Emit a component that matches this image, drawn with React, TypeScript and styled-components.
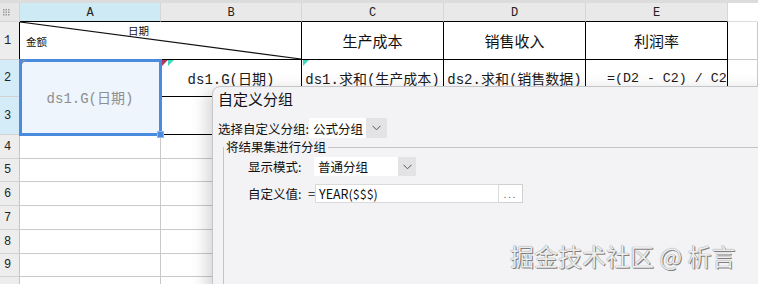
import { Fragment } from "react";
import styled, { createGlobalStyle } from "styled-components";

const GlobalStyle = createGlobalStyle`
	html, body {
		margin: 0;
		padding: 0;
		background: #fff;
		overflow: hidden;
	}
`;

const Page = styled.div`
	position: relative;
	width: 758px;
	height: 284px;
	overflow: hidden;
	background: #fff;
`;

const Sheet = styled.div`
	display: grid;
	grid-template-columns: 20px 141px 141px 142px 142px 142px 1fr;
	grid-template-rows: 19px 38px 37px 38px 24px 23px 24px 24px 24px 23px 24px;
	border-top: 3px solid #dcdcdc;
	font-family: "Liberation Mono", "Noto Sans CJK SC", monospace;
`;

const Corner = styled.div`
	display: flex;
	align-items: center;
	padding-left: 3px;
	background: #e6e6e6;
	border-right: 1px solid #d4d4d4;
	border-bottom: 1px solid #d4d4d4;
`;

const ColHead = styled.div<{ $active?: boolean; $blank?: boolean }>`
	display: flex;
	align-items: center;
	justify-content: center;
	padding-top: 2px;
	font-size: 12px;
	color: #222;
	background: ${(p) => (p.$active ? "#cdeaf5" : p.$blank ? "#fff" : "#e9e9e9")};
	border-right: 1px solid ${(p) => (p.$blank ? "#fff" : "#d6d6d6")};
	border-bottom: 1px solid ${(p) => (p.$blank ? "#dcdcdc" : "#000")};
`;

const RowHead = styled.div<{ $active?: boolean; $dark?: boolean }>`
	display: flex;
	align-items: center;
	padding-left: 4px;
	font-size: 12px;
	color: #222;
	background: ${(p) => (p.$active ? "#d4ecf7" : "#ededed")};
	border-right: 1px solid ${(p) => (p.$dark ? "#000" : "#c6c6c6")};
	border-bottom: 1px solid #d2d2d2;
`;

const Cell = styled.div<{ $dark?: boolean; $span?: number; $rows?: number }>`
	position: relative;
	grid-column: span ${(p) => p.$span ?? 1};
	grid-row: span ${(p) => p.$rows ?? 1};
	display: flex;
	align-items: center;
	justify-content: center;
	overflow: hidden;
	white-space: nowrap;
	font-size: 14px;
	color: #1a1a1a;
	border-right: 1px solid ${(p) => (p.$dark ? "#000" : "#c9c9c9")};
	border-bottom: 1px solid ${(p) => (p.$dark ? "#000" : "#c9c9c9")};
`;

const HeadCell = styled(Cell)`
	font-family: "Noto Sans CJK SC", sans-serif;
	font-size: 15px;
	color: #111;
`;

const FormulaCell = styled(Cell)`
	justify-content: flex-start;
	padding-left: 21px;
	font-size: 13.3px;
`;

const Selected = styled(Cell)`
	z-index: 1;
	overflow: visible;
	background: #eef5fd;
	color: #8e8e8e;
	outline: 3px solid #4a8be0;
	outline-offset: -2px;

	&::after {
		content: "";
		position: absolute;
		right: -4px;
		bottom: -4px;
		width: 5px;
		height: 5px;
		background: #4a8be0;
		border: 1px solid #8fb8ee;
	}
`;

const Diagonal = styled(Cell)`
	flex-direction: column;
	align-items: flex-start;
	justify-content: flex-start;
	padding: 3px 0 0 6px;
	font-family: "Noto Sans CJK SC", sans-serif;
	font-size: 10.5px;
	line-height: 11px;
	color: #111;

	svg {
		position: absolute;
		inset: 0;
		width: 100%;
		height: 100%;
	}
`;

const DiagTop = styled.span`
	margin-left: 102px;
`;

const Marker = styled.span<{ $color: string; $left: number; $size?: number }>`
	position: absolute;
	top: 0;
	left: ${(p) => p.$left}px;
	width: 0;
	height: 0;
	border-top: ${(p) => p.$size ?? 6}px solid ${(p) => p.$color};
	border-right: ${(p) => p.$size ?? 6}px solid transparent;
`;

const Dialog = styled.div`
	position: absolute;
	left: 212px;
	top: 86px;
	width: 580px;
	height: 230px;
	box-sizing: border-box;
	padding: 2px 0 0 5px;
	background: #f3f3f6;
	border: 1px solid #c6c6ca;
	border-radius: 8px 0 0 0;
	box-shadow: -6px 3px 16px rgba(0, 0, 0, 0.16);
	font-family: "Noto Sans CJK SC", "Noto Sans", sans-serif;
	color: #111;
`;

const Title = styled.div`
	font-size: 15px;
	line-height: 20px;
`;

const Row = styled.div<{ $top: number; $h: number }>`
	display: flex;
	align-items: center;
	height: ${(p) => p.$h}px;
	margin-top: ${(p) => p.$top}px;
	font-size: 12.5px;
`;

const Label = styled.span<{ $w: number }>`
	flex: none;
	width: ${(p) => p.$w}px;
	white-space: nowrap;
`;

const Select = styled.div<{ $w: number }>`
	display: flex;
	width: ${(p) => p.$w}px;
	height: 100%;
	background: #fff;
`;

const SelectText = styled.span`
	flex: 1;
	display: flex;
	align-items: center;
	padding-left: 4px;
`;

const SelectArrow = styled.span<{ $w: number }>`
	flex: none;
	display: flex;
	align-items: center;
	justify-content: center;
	width: ${(p) => p.$w}px;
	background: #e3e3e5;
`;

const Group = styled.fieldset`
	margin: 2px 0 0 5px;
	padding: 0;
	min-height: 170px;
	border: 1px solid #c4c4c4;
	border-right: none;
	border-bottom: none;
`;

const Legend = styled.legend`
	padding: 0 2px;
	font-size: 12.5px;
	line-height: 14px;
`;

const GroupBody = styled.div`
	padding: 3px 0 0 24px;
`;

const Equals = styled.span`
	flex: none;
	width: 7px;
	font-size: 13px;
`;

const Input = styled.div`
	display: flex;
	align-items: center;
	box-sizing: border-box;
	width: 184px;
	height: 100%;
	padding-left: 3px;
	background: #fff;
	border: 1px solid #dadada;
	font-size: 12.5px;
`;

const DotsButton = styled.div`
	display: flex;
	align-items: flex-end;
	justify-content: center;
	box-sizing: border-box;
	width: 24px;
	height: 100%;
	padding-bottom: 3px;
	background: #fff;
	border: 1px solid #d0d0d0;
	border-left: none;
	font-size: 9px;
	line-height: 9px;
	letter-spacing: 2px;
	color: #666;
`;

const Watermark = styled.div`
	position: absolute;
	left: 510px;
	top: 238px;
	font-family: "Noto Sans CJK SC", sans-serif;
	font-size: 24px;
	color: #ececec;
	white-space: pre;
	text-shadow: 1px 1px 0 rgba(0, 0, 0, 0.45), 0 0 1px rgba(0, 0, 0, 0.55);
`;

function Chevron() {
	return (
		<svg width="9" height="6" viewBox="0 0 9 6">
			<polyline points="0.5,0.8 4.5,4.8 8.5,0.8" fill="none" stroke="#555" strokeWidth="1" />
		</svg>
	);
}

function GripIcon() {
	const dots = [];
	for (let r = 0; r < 3; r++) {
		for (let c = 0; c < 3; c++) {
			dots.push(<rect key={`${r}-${c}`} x={c * 2.5} y={r * 2.5} width="1.5" height="1.5" fill="#9a9a9a" />);
		}
	}
	return (
		<svg width="7" height="7" viewBox="0 0 7 7">
			{dots}
		</svg>
	);
}

const letters = ["A", "B", "C", "D", "E"];

export default function App() {
	return (
		<Page>
			<GlobalStyle />
			<Sheet>
				<Corner>
					<GripIcon />
				</Corner>
				{letters.map((l) => (
					<ColHead key={l} $active={l === "A"}>
						{l}
					</ColHead>
				))}
				<ColHead $blank />

				<RowHead $dark>1</RowHead>
				<Diagonal $dark $span={2}>
					<svg viewBox="0 0 100 100" preserveAspectRatio="none">
						<line x1="0" y1="0" x2="100" y2="100" stroke="#111" strokeWidth="1.2" vectorEffect="non-scaling-stroke" />
					</svg>
					<DiagTop>日期</DiagTop>
					<span>金额</span>
				</Diagonal>
				<HeadCell $dark>生产成本</HeadCell>
				<HeadCell $dark>销售收入</HeadCell>
				<HeadCell $dark>利润率</HeadCell>
				<Cell />

				<RowHead $dark $active>2</RowHead>
				<Selected $dark $rows={2}>
					<Marker $color="#7d8fae" $left={2} $size={4} />
					ds1.G(日期)
				</Selected>
				<Cell $dark>
					<Marker $color="#b03a5e" $left={1} />
					<Marker $color="#3fd8c2" $left={7} />
					ds1.G(日期)
				</Cell>
				<Cell $dark>
					<Marker $color="#3fd8c2" $left={1} />
					ds1.求和(生产成本)
				</Cell>
				<Cell $dark>ds2.求和(销售数据)</Cell>
				<FormulaCell $dark>=(D2 - C2) / C2</FormulaCell>
				<Cell />

				<RowHead $dark $active>3</RowHead>
				<Cell $dark />
				<Cell $dark />
				<Cell $dark />
				<Cell $dark />
				<Cell />

				{[4, 5, 6, 7, 8, 9, 10].map((n) => (
					<Fragment key={n}>
						<RowHead>{n < 10 ? n : ""}</RowHead>
						{[0, 1, 2, 3, 4, 5].map((c) => (
							<Cell key={c} />
						))}
					</Fragment>
				))}
			</Sheet>

			<Dialog>
				<Title>自定义分组</Title>
				<Row $top={9} $h={20}>
					<Label $w={91}>选择自定义分组:</Label>
					<Select $w={78}>
						<SelectText>公式分组</SelectText>
						<SelectArrow $w={21}>
							<Chevron />
						</SelectArrow>
					</Select>
				</Row>
				<Group>
					<Legend>将结果集进行分组</Legend>
					<GroupBody>
						<Row $top={0} $h={19}>
							<Label $w={66}>显示模式:</Label>
							<Select $w={102}>
								<SelectText>普通分组</SelectText>
								<SelectArrow $w={18}>
									<Chevron />
								</SelectArrow>
							</Select>
						</Row>
						<Row $top={8} $h={19}>
							<Label $w={60}>自定义值:</Label>
							<Equals>=</Equals>
							<Input>YEAR($$$)</Input>
							<DotsButton>...</DotsButton>
						</Row>
					</GroupBody>
				</Group>
			</Dialog>

			<Watermark>掘金技术社区 @ 析言</Watermark>
		</Page>
	);
}
